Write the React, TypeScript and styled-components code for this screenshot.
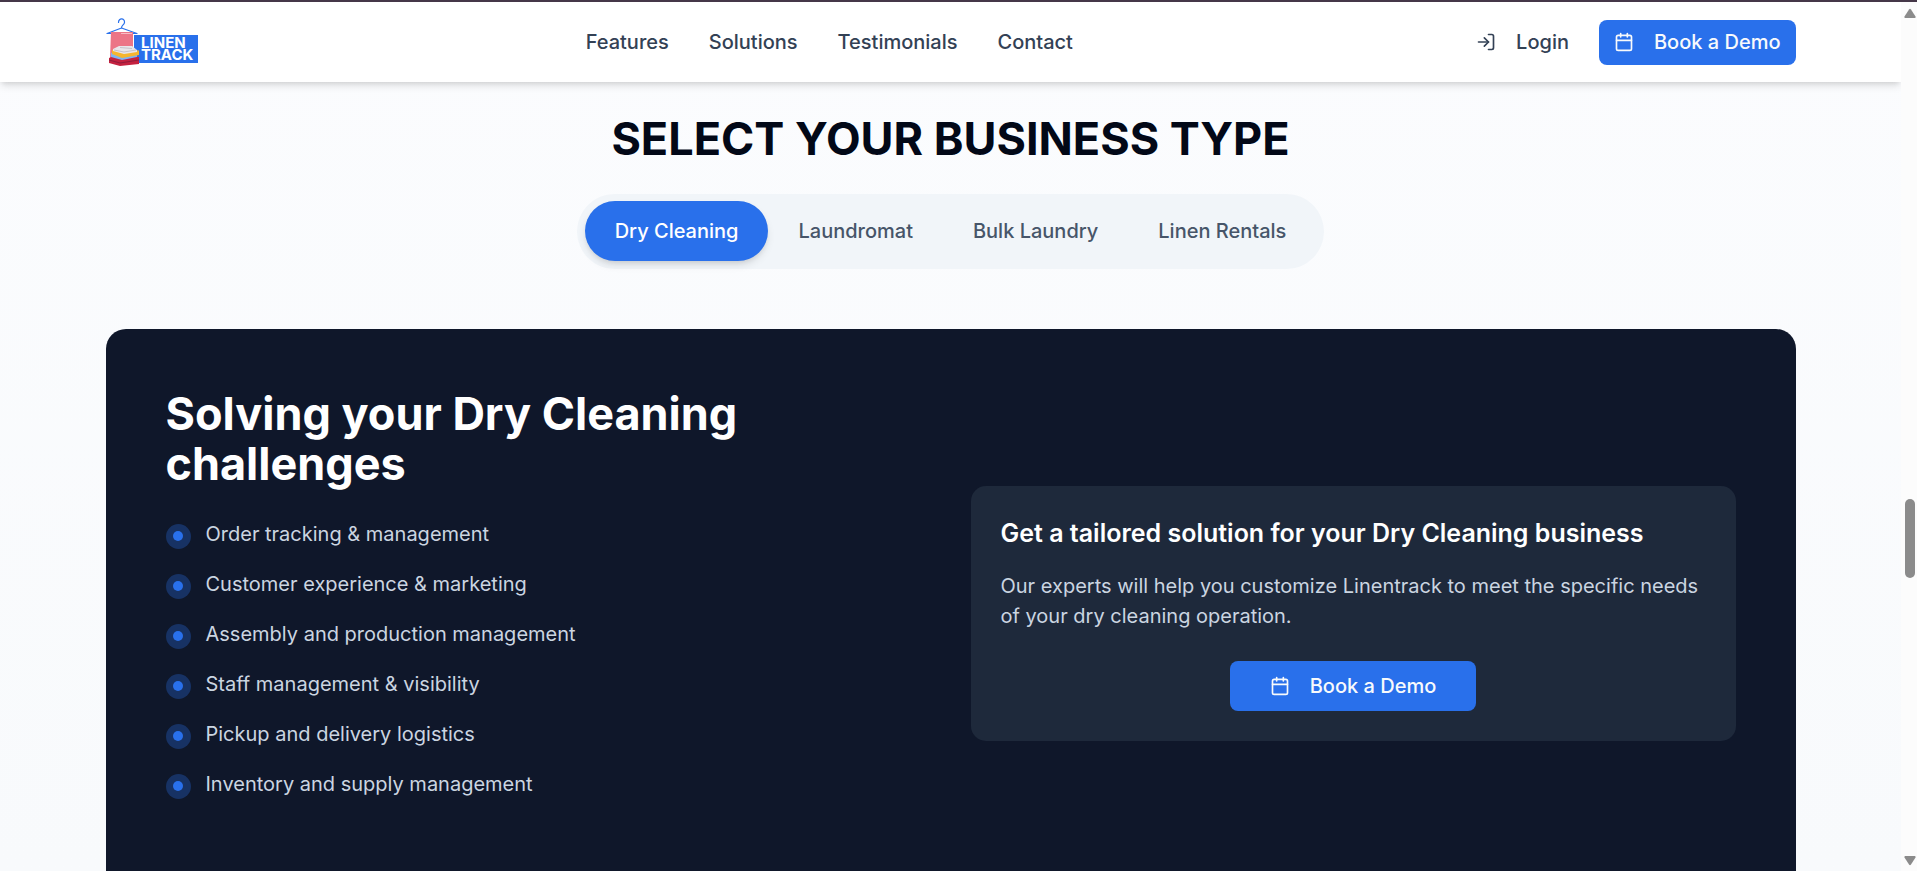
import React, { useState } from "react";
import styled, { createGlobalStyle } from "styled-components";
import { Calendar, LogIn } from "lucide-react";

const GlobalStyle = createGlobalStyle`
  *, *::before, *::after { box-sizing: border-box; }
  body {
    margin: 0;
    overflow: hidden;
    font-family: Inter, "Liberation Sans", sans-serif;
    font-size: 20px;
    line-height: 30px;
    color: #020817;
    background: #f9fbfd;
  }
  h1, h2, h3, p, ul { margin: 0; padding: 0; }
`;

const Shell = styled.div`
  display: flex;
  height: 100vh;
  overflow: hidden;
  border-top: 2px solid #453748;
`;

const Viewport = styled.div`
  flex: 1;
  min-width: 0;
  overflow: hidden;
  background: linear-gradient(180deg, #fbfcfe 0%, #f8fafc 100%);
`;

const Container = styled.div`
  width: 100%;
  max-width: 1750px;
  margin: 0 auto;
  padding: 0 30px;
`;

const Header = styled.header`
  position: relative;
  background: #fff;
  box-shadow: 0 5px 8px -1px rgba(0, 0, 0, 0.1), 0 3px 5px -2px rgba(0, 0, 0, 0.1);
`;

const HeaderRow = styled(Container)`
  display: flex;
  justify-content: space-between;
  align-items: center;
  height: 80px;
`;

const LogoLink = styled.a`
  display: flex;
  width: 92px;
`;

const Nav = styled.nav`
  display: flex;
  gap: 40px;
`;

const NavLink = styled.a`
  display: inline-flex;
  align-items: center;
  gap: 20px;
  color: #334155;
  font-weight: 500;
  text-decoration: none;
`;

const LoginLink = styled(NavLink)`
  padding: 0 15px;
`;

const Actions = styled.div`
  display: flex;
  align-items: center;
  gap: 15px;
`;

const DemoButton = styled.button<{ $large?: boolean }>`
  display: inline-flex;
  align-items: center;
  gap: 20px;
  height: ${(p) => (p.$large ? 50 : 45)}px;
  padding: 0 ${(p) => (p.$large ? 40 : 15)}px;
  border: 0;
  border-radius: 8px;
  background: #2970eb;
  color: #f8fafc;
  font: inherit;
  font-weight: 500;
  white-space: nowrap;
  cursor: pointer;
`;

const Title = styled.h1`
  padding-top: 32px;
  font-size: 45px;
  line-height: 50px;
  font-weight: 700;
  text-align: center;
`;

const Tabs = styled.div`
  display: flex;
  width: fit-content;
  margin: 30px auto 60px;
  padding: 7px 8px 8px;
  border-radius: 38px;
  background: #f1f5f9;
`;

const Tab = styled.button<{ $active: boolean }>`
  height: 60px;
  padding: 0 30px;
  border: 0;
  border-radius: 30px;
  background: ${(p) => (p.$active ? "#2970eb" : "transparent")};
  color: ${(p) => (p.$active ? "#fff" : "#475569")};
  box-shadow: ${(p) => (p.$active ? "0 5px 8px -1px rgba(0, 0, 0, 0.1), 0 3px 5px -2px rgba(0, 0, 0, 0.1)" : "none")};
  font: inherit;
  font-weight: 500;
  cursor: pointer;
`;

const Panel = styled.section`
  display: grid;
  grid-template-columns: 1fr 1fr;
  gap: 40px;
  align-items: center;
  padding: 60px;
  border-radius: 20px;
  background: #0f172a;
`;

const Challenges = styled.div`
  padding-bottom: 38px;
`;

const PanelTitle = styled.h2`
  margin-bottom: 30px;
  color: #fff;
  font-size: 45px;
  line-height: 50px;
  font-weight: 700;
`;

const List = styled.ul`
  display: flex;
  flex-direction: column;
  gap: 20px;
  list-style: none;
`;

const Item = styled.li`
  display: flex;
  gap: 15px;
  height: 30px;
  color: #cbd5e1;
`;

const Bullet = styled.span`
  display: grid;
  place-items: center;
  flex: none;
  width: 25px;
  height: 25px;
  margin-top: 5px;
  padding: 0 1px 1px 0;
  border-radius: 50%;
  background: #173264;

  &::after {
    content: "";
    width: 10px;
    height: 10px;
    border-radius: 50%;
    background: #2970eb;
  }
`;

const Card = styled.div`
  display: flex;
  flex-direction: column;
  align-items: center;
  padding: 30px;
  border-radius: 15px;
  background: #1e293b;
`;

const CardTitle = styled.h3`
  align-self: stretch;
  margin-bottom: 20px;
  color: #fff;
  font-size: 25px;
  line-height: 35px;
  font-weight: 600;
`;

const CardText = styled.p`
  align-self: stretch;
  margin-bottom: 30px;
  color: #cbd5e1;
`;

const ScrollTrack = styled.div`
  display: flex;
  flex-direction: column;
  align-items: center;
  width: 16px;
  padding: 6px 0 5px 2px;
  background: #fcfcfc;
`;

const ScrollThumb = styled.div`
  width: 10px;
  height: 79px;
  border-radius: 5px;
  background: #8b8b8b;
`;

const Spacer = styled.div<{ $grow: number }>`
  flex: ${(p) => p.$grow};
`;

const Arrow = ({ down = false }: { down?: boolean }) => (
  <svg width="12" height="10" viewBox="0 0 12 10" aria-hidden="true">
    <path
      d={down ? "M1 0H11Q12 .5 11.5 1.5L7 8.5Q6 10 5 8.5L.5 1.5Q0 .5 1 0Z" : "M1 10H11Q12 9.5 11.5 8.5L7 1.5Q6 0 5 1.5L.5 8.5Q0 9.5 1 10Z"}
      fill="#8b8b8b"
    />
  </svg>
);

const Logo = () => (
  <svg width="92" height="50" viewBox="0 0 92 50" role="img" aria-label="Linen Track">
    <path d="M12.500 5.500C12.500 .5 19 1 18.500 5.500C18.200 8 15.500 8 15.500 11L1 16.500H31L15.500 11" fill="none" stroke="#2970eb" strokeWidth="1.200" strokeLinejoin="round" strokeLinecap="round" />
    <path d="M5 15H27V41H4Z" fill="#ec7587" />
    <path d="M15 16.500H26" stroke="#f7bcc5" strokeWidth="1" />
    <rect x="28" y="18" width="64" height="28" fill="#2970eb" />
    <path d="M3 41L10 38L33 40V47L14 49L3 46Z" fill="#c4213f" />
    <path d="M3 43L14 46L33 43" fill="none" stroke="#8f1c3c" strokeWidth="1" />
    <path d="M5 36L14 33L31 36V40L16 43L5 40Z" fill="#7fb3f2" />
    <path d="M6 33L14 31L33 33.500V38L16 41L6 37Z" fill="#f6b52e" />
    <path d="M7 32L13 29L26 29L31 33V35L18 37L7 34Z" fill="#e9e6ea" />
    <path d="M8 33L18 35L30 33M14 30.500L26 31.500" fill="none" stroke="#bdb8c1" strokeWidth=".8" />
    <g fill="#fff" fontFamily="Inter, sans-serif" fontWeight="700" fontSize="15">
      <text x="35" y="31">LINEN</text>
      <text x="35" y="43">TRACK</text>
    </g>
  </svg>
);

const navItems = ["Features", "Solutions", "Testimonials", "Contact"];
const businessTypes = ["Dry Cleaning", "Laundromat", "Bulk Laundry", "Linen Rentals"];
const challenges = [
  "Order tracking & management",
  "Customer experience & marketing",
  "Assembly and production management",
  "Staff management & visibility",
  "Pickup and delivery logistics",
  "Inventory and supply management",
];

export default function App() {
  const [active, setActive] = useState(businessTypes[0]);

  return (
    <>
      <GlobalStyle />
      <Shell>
        <Viewport>
          <Header>
            <HeaderRow>
              <LogoLink href="#home"><Logo /></LogoLink>
              <Nav>
                {navItems.map((item) => (
                  <NavLink key={item} href={`#${item.toLowerCase()}`}>{item}</NavLink>
                ))}
              </Nav>
              <Actions>
                <LoginLink href="#login"><LogIn size={20} />Login</LoginLink>
                <DemoButton><Calendar size={20} />Book a Demo</DemoButton>
              </Actions>
            </HeaderRow>
          </Header>
          <Container as="main">
            <Title>SELECT YOUR BUSINESS TYPE</Title>
            <Tabs role="tablist">
              {businessTypes.map((type) => (
                <Tab key={type} role="tab" aria-selected={type === active} $active={type === active} onClick={() => setActive(type)}>
                  {type}
                </Tab>
              ))}
            </Tabs>
            <Panel>
              <Challenges>
                <PanelTitle>{`Solving your ${active} challenges`}</PanelTitle>
                <List>
                  {challenges.map((text) => (
                    <Item key={text}><Bullet />{text}</Item>
                  ))}
                </List>
              </Challenges>
              <Card>
                <CardTitle>{`Get a tailored solution for your ${active} business`}</CardTitle>
                <CardText>
                  {`Our experts will help you customize Linentrack to meet the specific needs of your ${active.toLowerCase()} operation.`}
                </CardText>
                <DemoButton $large><Calendar size={20} />Book a Demo</DemoButton>
              </Card>
            </Panel>
          </Container>
        </Viewport>
        <ScrollTrack aria-hidden="true">
          <Arrow />
          <Spacer $grow={481} />
          <ScrollThumb />
          <Spacer $grow={278} />
          <Arrow down />
        </ScrollTrack>
      </Shell>
    </>
  );
}
